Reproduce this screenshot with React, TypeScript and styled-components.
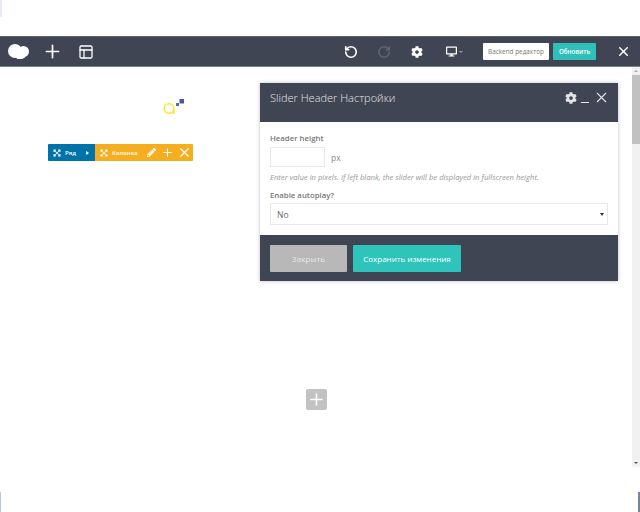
import styled, { createGlobalStyle } from 'styled-components';
import { Plus, PanelsTopLeft, RotateCcw, RotateCw, X } from 'lucide-react';
import { FaCog, FaDesktop, FaPencilAlt, FaExpandArrowsAlt } from 'react-icons/fa';

const GlobalStyle = createGlobalStyle`
	html, body {
		margin: 0;
		padding: 0;
		background: #fff;
		overflow: hidden;
	}
	body {
		font-family: "Open Sans", "Liberation Sans", sans-serif;
	}
`;

function App() {
	return (
		<Page>
			<GlobalStyle />
			<TopStrip>
				<TopSliver />
			</TopStrip>
			<Navbar>
				<NavGroup>
					<svg width="21" height="16" viewBox="0 0 21 16" fill="#fff">
						<circle cx="7" cy="7" r="7" />
						<circle cx="15.5" cy="7.5" r="5.5" />
						<path d="M8 12 h9 v1.5 l-3 1.5 h-5 z" />
					</svg>
					<NavIcon $left={12.5}><Plus size={21} strokeWidth={1.9} /></NavIcon>
					<NavIcon $left={15}><PanelsTopLeft size={16} strokeWidth={1.9} /></NavIcon>
				</NavGroup>
				<NavActions>
					<NavIcon $left={0}><RotateCcw size={14} strokeWidth={2.8} /></NavIcon>
					<NavIcon $left={19} $muted><RotateCw size={14} strokeWidth={2.8} /></NavIcon>
					<NavIcon $left={20}><FaCog size={12} /></NavIcon>
					<NavIcon $left={22.5}><FaDesktop size={11} /><Caret /></NavIcon>
					<BackendButton>Backend редактор</BackendButton>
					<UpdateButton>Обновить</UpdateButton>
					<NavIcon $left={19.5}><X size={15} strokeWidth={2.4} /></NavIcon>
				</NavActions>
			</Navbar>
			<Workspace>
				<Canvas>
					<LogoMark>
						<svg width="22" height="17" viewBox="0 0 22 17">
							<circle cx="6" cy="10.5" r="4.8" fill="none" stroke="#fce62b" strokeWidth="1.5" />
							<path d="M10.8 10.5 V16" stroke="#fce62b" strokeWidth="1.5" />
							<rect x="13" y="5" width="3" height="3" fill="#5569b8" />
							<rect x="16.5" y="1" width="4.5" height="4.5" fill="#4259ae" />
						</svg>
					</LogoMark>
					<ControlBar>
						<RowControl>
							<FaExpandArrowsAlt size={8} />
							<ControlLabel>Ряд</ControlLabel>
							<RowArrow />
						</RowControl>
						<ColumnControl>
							<FaExpandArrowsAlt size={8} />
							<ControlLabel>Колонка</ControlLabel>
							<ColumnTools>
								<FaPencilAlt size={9} />
								<Plus size={13} strokeWidth={2} />
								<X size={15} strokeWidth={1.8} />
							</ColumnTools>
						</ColumnControl>
					</ControlBar>
					<AddRow>
						<AddButton><Plus size={19} strokeWidth={2} /></AddButton>
					</AddRow>
				</Canvas>
				<Scrollbar>
					<ScrollArrow $up />
					<ScrollTrack><ScrollThumb /></ScrollTrack>
					<ScrollArrow />
				</Scrollbar>
				<Modal>
					<ModalHeader>
						<ModalTitle>Slider Header Настройки</ModalTitle>
						<ModalTools>
							<FaCog size={12} />
							<MinimizeDash />
							<X size={17} strokeWidth={1.5} />
						</ModalTools>
					</ModalHeader>
					<ModalBody>
						<FieldLabel>Header height</FieldLabel>
						<HeightRow>
							<HeightInput />
							<Unit>px</Unit>
						</HeightRow>
						<HelpText>Enter value in pixels. If left blank, the slider will be displayed in fullscreen height.</HelpText>
						<AutoplayLabel>Enable autoplay?</AutoplayLabel>
						<SelectBox>
							<span>No</span>
							<SelectArrow />
						</SelectBox>
					</ModalBody>
					<ModalFooter>
						<FooterButton $variant="close">Закрыть</FooterButton>
						<FooterButton $variant="save">Сохранить изменения</FooterButton>
					</ModalFooter>
				</Modal>
			</Workspace>
			<BottomStrip>
				<Sliver $width={1} $color="#b9c7d6" />
				<Sliver $width={2.5} $color="#76859a" />
			</BottomStrip>
		</Page>
	);
}

export default App;

const Page = styled.div`
	display: flex;
	flex-direction: column;
	width: 640px;
	height: 512px;
	background: #fff;
	overflow: hidden;
`;

const TopStrip = styled.div`
	height: 36px;
	flex: none;
`;

const TopSliver = styled.div`
	width: 1.5px;
	height: 17px;
	background: #e6ebf2;
`;

const Navbar = styled.div`
	display: flex;
	align-items: center;
	justify-content: space-between;
	flex: none;
	box-sizing: border-box;
	height: 31px;
	padding: 0 9.5px 0 8px;
	background: #404553;
	border-top: 1px solid #5d616d;
	border-bottom: 1px solid #7d818b;
`;

const NavGroup = styled.div`
	display: flex;
	align-items: center;
`;

const NavActions = styled.div`
	display: flex;
	align-items: center;
`;

const NavIcon = styled.span<{ $left: number; $muted?: boolean }>`
	display: flex;
	align-items: center;
	margin-left: ${props => props.$left}px;
	color: ${props => (props.$muted ? '#5f6470' : '#fff')};
`;

const Caret = styled.i`
	width: 0;
	height: 0;
	margin-left: 2px;
	border-left: 2px solid transparent;
	border-right: 2px solid transparent;
	border-top: 2px solid #9a9da6;
`;

const BackendButton = styled.button`
	box-sizing: border-box;
	width: 66px;
	height: 17px;
	margin-left: 20.5px;
	padding: 0;
	border: none;
	border-radius: 1px;
	background: #fff;
	color: #777;
	font-family: inherit;
	font-size: 6.4px;
`;

const UpdateButton = styled.button`
	box-sizing: border-box;
	width: 43px;
	height: 17px;
	margin-left: 4px;
	padding: 0;
	border: none;
	border-radius: 1px;
	background: #2fc1b9;
	color: #fff;
	font-family: inherit;
	font-size: 6.2px;
	font-weight: 600;
`;

const Workspace = styled.div`
	position: relative;
	display: flex;
	flex: none;
	height: 400px;
`;

const Canvas = styled.div`
	display: flex;
	flex-direction: column;
	flex: 1;
`;

const LogoMark = styled.div`
	display: flex;
	height: 17px;
	padding: 31px 0 0 163px;
`;

const ControlBar = styled.div`
	display: flex;
	align-self: flex-start;
	height: 17px;
	margin: 29px 0 0 48px;
	border-radius: 1px;
	overflow: hidden;
	color: #fff;
`;

const RowControl = styled.div`
	display: flex;
	align-items: center;
	box-sizing: border-box;
	width: 47px;
	padding: 0 5px 0 5px;
	background: #0073aa;
`;

const ColumnControl = styled.div`
	display: flex;
	align-items: center;
	box-sizing: border-box;
	width: 98px;
	padding: 0 1px 0 5px;
	background: #f5ae1f;
`;

const ControlLabel = styled.span`
	margin-left: 4px;
	font-size: 6px;
	font-weight: 600;
`;

const RowArrow = styled.i`
	width: 0;
	height: 0;
	margin-left: auto;
	margin-right: 1px;
	border-top: 2px solid transparent;
	border-bottom: 2px solid transparent;
	border-left: 3px solid #fff;
`;

const ColumnTools = styled.div`
	display: flex;
	align-items: center;
	gap: 3px;
	margin-left: auto;

	svg:first-child {
		margin-right: 2px;
	}
`;

const AddRow = styled.div`
	display: flex;
	justify-content: center;
	margin-top: 228px;
`;

const AddButton = styled.div`
	display: flex;
	align-items: center;
	justify-content: center;
	width: 21px;
	height: 21px;
	border-radius: 2px;
	background: #c2c2c2;
	color: #fff;
`;

const Scrollbar = styled.div`
	display: flex;
	flex-direction: column;
	align-items: center;
	flex: none;
	width: 8px;
	background: #f1f1f1;
`;

const ScrollArrow = styled.i<{ $up?: boolean }>`
	flex: none;
	width: 0;
	height: 0;
	margin: 3px 0;
	border-left: 2px solid transparent;
	border-right: 2px solid transparent;
	border-top: ${props => (props.$up ? 'none' : '2px solid #555')};
	border-bottom: ${props => (props.$up ? '2px solid #aaa' : 'none')};
`;

const ScrollTrack = styled.div`
	flex: 1;
	align-self: stretch;
`;

const ScrollThumb = styled.div`
	height: 69px;
	background: #c1c1c1;
`;

const Modal = styled.div`
	position: absolute;
	top: 16px;
	left: 260px;
	display: flex;
	flex-direction: column;
	width: 358px;
	background: #fff;
	box-shadow: 0 0 4px rgba(0, 0, 0, 0.25);
`;

const ModalHeader = styled.div`
	display: flex;
	align-items: center;
	justify-content: space-between;
	box-sizing: border-box;
	height: 39px;
	padding: 0 8px 10px 10px;
	background: #404553;
	color: #e4e5e8;
`;

const ModalTitle = styled.div`
	font-size: 11px;
	font-weight: 300;
`;

const ModalTools = styled.div`
	display: flex;
	align-items: center;
	gap: 4px;
`;

const MinimizeDash = styled.i`
	width: 8px;
	height: 1px;
	margin-top: 9px;
	background: #e4e5e8;
`;

const ModalBody = styled.div`
	display: flex;
	flex-direction: column;
	box-sizing: border-box;
	height: 113px;
	padding: 11px 10px 0;
`;

const FieldLabel = styled.div`
	height: 14px;
	color: #777;
	font-size: 7.8px;
	font-weight: 600;
	line-height: 11px;
`;

const AutoplayLabel = styled(FieldLabel)`
	margin-top: 6px;
	height: 13px;
`;

const HeightRow = styled.div`
	display: flex;
	align-items: center;
`;

const HeightInput = styled.div`
	box-sizing: border-box;
	width: 55px;
	height: 20px;
	border: 1px solid #e8e8e8;
	background: #fff;
`;

const Unit = styled.span`
	margin-left: 6px;
	color: #888;
	font-size: 8.5px;
`;

const HelpText = styled.div`
	margin-top: 4px;
	height: 13px;
	color: #999;
	font-size: 7.65px;
	font-style: italic;
	line-height: 12px;
	white-space: nowrap;
`;

const SelectBox = styled.div`
	display: flex;
	align-items: center;
	justify-content: space-between;
	box-sizing: border-box;
	height: 22px;
	padding: 0 3px 0 6px;
	border: 1px solid #e8e8e8;
	color: #666;
	font-size: 8.5px;
`;

const SelectArrow = styled.i`
	width: 0;
	height: 0;
	border-left: 2px solid transparent;
	border-right: 2px solid transparent;
	border-top: 3px solid #333;
`;

const ModalFooter = styled.div`
	display: flex;
	gap: 6px;
	box-sizing: border-box;
	height: 46px;
	padding: 10px 10px 0;
	background: #404553;
`;

const FooterButton = styled.button<{ $variant: 'close' | 'save' }>`
	box-sizing: border-box;
	width: ${props => (props.$variant === 'close' ? '77px' : '108px')};
	height: 27px;
	padding: 0;
	border: none;
	border-radius: 1px;
	background: ${props => (props.$variant === 'close' ? '#b8b8b8' : '#2fc4bb')};
	color: ${props => (props.$variant === 'close' ? '#e6e6e6' : '#fff')};
	font-family: inherit;
	font-size: 8px;
	font-weight: 400;
`;

const BottomStrip = styled.div`
	display: flex;
	justify-content: space-between;
	align-items: flex-end;
	flex: 1;
`;

const Sliver = styled.div<{ $width: number; $color: string }>`
	width: ${props => props.$width}px;
	height: 20px;
	background: ${props => props.$color};
`;
